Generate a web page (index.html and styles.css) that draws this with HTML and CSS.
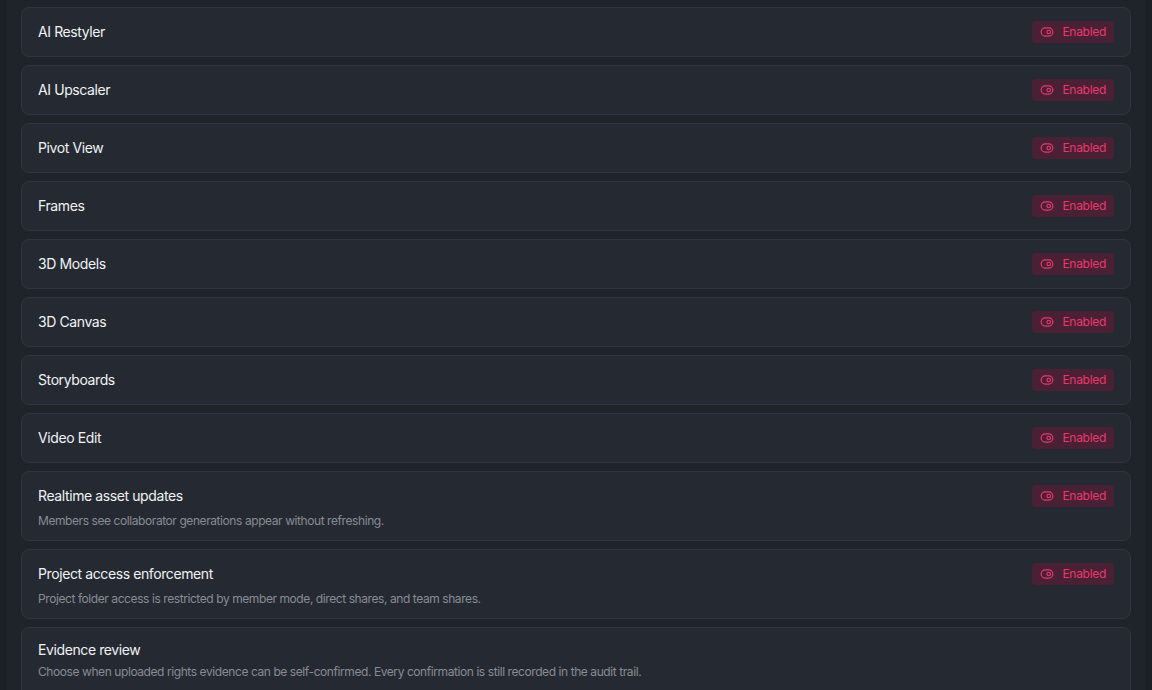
FILE: index.html
```html
<!DOCTYPE html>
<html lang="en">
<head>
<meta charset="utf-8">
<title>Features</title>
<link rel="stylesheet" href="styles.css">
</head>
<body>
<div class="panel">
  <div class="list">
    <div class="card"><div class="row"><span class="title">AI Restyler</span><span class="badge"><svg viewBox="0 0 24 24"><rect x="2" y="5" width="20" height="14" rx="7"/><circle cx="15" cy="12" r="3"/></svg>Enabled</span></div></div>
    <div class="card"><div class="row"><span class="title">AI Upscaler</span><span class="badge"><svg viewBox="0 0 24 24"><rect x="2" y="5" width="20" height="14" rx="7"/><circle cx="15" cy="12" r="3"/></svg>Enabled</span></div></div>
    <div class="card"><div class="row"><span class="title">Pivot View</span><span class="badge"><svg viewBox="0 0 24 24"><rect x="2" y="5" width="20" height="14" rx="7"/><circle cx="15" cy="12" r="3"/></svg>Enabled</span></div></div>
    <div class="card"><div class="row"><span class="title">Frames</span><span class="badge"><svg viewBox="0 0 24 24"><rect x="2" y="5" width="20" height="14" rx="7"/><circle cx="15" cy="12" r="3"/></svg>Enabled</span></div></div>
    <div class="card"><div class="row"><span class="title">3D Models</span><span class="badge"><svg viewBox="0 0 24 24"><rect x="2" y="5" width="20" height="14" rx="7"/><circle cx="15" cy="12" r="3"/></svg>Enabled</span></div></div>
    <div class="card"><div class="row"><span class="title">3D Canvas</span><span class="badge"><svg viewBox="0 0 24 24"><rect x="2" y="5" width="20" height="14" rx="7"/><circle cx="15" cy="12" r="3"/></svg>Enabled</span></div></div>
    <div class="card"><div class="row"><span class="title">Storyboards</span><span class="badge"><svg viewBox="0 0 24 24"><rect x="2" y="5" width="20" height="14" rx="7"/><circle cx="15" cy="12" r="3"/></svg>Enabled</span></div></div>
    <div class="card"><div class="row"><span class="title">Video Edit</span><span class="badge"><svg viewBox="0 0 24 24"><rect x="2" y="5" width="20" height="14" rx="7"/><circle cx="15" cy="12" r="3"/></svg>Enabled</span></div></div>
    <div class="card card-desc"><div class="row"><span class="title">Realtime asset updates</span><span class="badge"><svg viewBox="0 0 24 24"><rect x="2" y="5" width="20" height="14" rx="7"/><circle cx="15" cy="12" r="3"/></svg>Enabled</span></div><p class="desc">Members see collaborator generations appear without refreshing.</p></div>
    <div class="card card-desc"><div class="row"><span class="title">Project access enforcement</span><span class="badge"><svg viewBox="0 0 24 24"><rect x="2" y="5" width="20" height="14" rx="7"/><circle cx="15" cy="12" r="3"/></svg>Enabled</span></div><p class="desc">Project folder access is restricted by member mode, direct shares, and team shares.</p></div>
    <div class="card card-desc card-last"><div class="row row-plain"><span class="title">Evidence review</span></div><p class="desc">Choose when uploaded rights evidence can be self-confirmed. Every confirmation is still recorded in the audit trail.</p><div class="spacer"></div></div>
  </div>
</div>
</body>
</html>
```

FILE: styles.css
```css
html, body {
  margin: 0;
  padding: 0;
  background: #1c2027;
  height: 690px;
  overflow: hidden;
  font-family: Inter, "Noto Sans", "Liberation Sans", sans-serif;
}

.panel {
  margin-left: 7px;
  width: 1138px;
  min-height: 690px;
  background: #1f232a;
  padding: 7px 14px 0 14px;
  box-sizing: border-box;
}

.list {
  display: flex;
  flex-direction: column;
  gap: 8px;
}

.card {
  background: #252a32;
  border: 1px solid #30353e;
  border-radius: 8px;
  padding: 13px 16px;
}

.card-desc {
  padding-bottom: 10px;
}

.row {
  display: flex;
  align-items: center;
  justify-content: space-between;
  height: 22px;
}

.row-plain {
  height: 20px;
}

.card-last .row-plain {
  margin-top: -1px;
}

.title {
  font-size: 14px;
  line-height: 20px;
  font-weight: 400;
  letter-spacing: -0.4px;
  color: #f0f2f4;
}

.desc {
  margin: 5px 0 0 0;
  font-size: 12px;
  line-height: 18px;
  letter-spacing: -0.42px;
  color: #878c95;
}

.card-last .desc {
  margin-top: 3px;
}

.spacer {
  height: 60px;
}

.badge {
  display: inline-flex;
  align-items: center;
  gap: 8px;
  height: 22px;
  padding: 0 8px;
  box-sizing: border-box;
  border-radius: 4px;
  background: #4a2134;
  color: #e8386f;
  font-size: 12px;
  line-height: 16px;
  letter-spacing: -0.3px;
}

.badge svg {
  width: 14px;
  height: 14px;
  fill: none;
  stroke: #e8386f;
  stroke-width: 2;
  stroke-linecap: round;
  stroke-linejoin: round;
}
```
